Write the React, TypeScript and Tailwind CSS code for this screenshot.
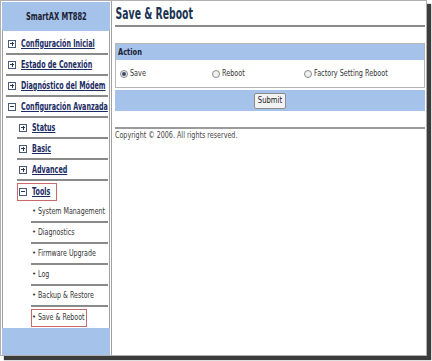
import React from "react";

const blue = "bg-[#a4c2ea]";

// texto comprimido a lo ancho, como en la captura
const Txt = ({ children, className = "", center }: { children: React.ReactNode; className?: string; center?: boolean }) => (
  <span className={`inline-block whitespace-nowrap ${center ? "origin-center" : "origin-left"} ${className}`}>
    {children}
  </span>
);

// cuadrito con + o -
const Box = ({ open }: { open?: boolean }) => (
  <span className="inline-flex items-center justify-center w-[8px] h-[8px] border border-[#4a5a7a] bg-white mr-[5px] shrink-0">
    <span className="block w-[4px] h-[1px] bg-[#2a3550] relative">
      {!open && <span className="absolute left-[1.5px] -top-[1.5px] block w-[1px] h-[4px] bg-[#2a3550]" />}
    </span>
  </span>
);

const Item = ({ label, indent, open, boxed, line = true }: { label: string; indent: string; open?: boolean; boxed?: string; line?: boolean }) => (
  <div className={`h-[21px] flex items-center ${indent}`}>
    <div className={`flex-1 min-w-0 h-full flex items-center ${line ? "border-b-2 border-[#8a8a8a]" : ""}`}>
      <span className={`flex items-center h-[18px] pl-[1px] shrink-0 ${boxed ? `border border-[#c86a6a] ${boxed}` : "border border-transparent"}`}>
        <Box open={open} />
        <Txt className="font-bold underline text-[#1b2c63] text-[10px] leading-none scale-x-[0.64]">{label}</Txt>
      </span>
    </div>
  </div>
);

const SubItem = ({ label, boxed, line = true }: { label: string; boxed?: string; line?: boolean }) => (
  <div className="h-[21px] flex items-center pl-[28px]">
    <div className={`flex-1 min-w-0 h-full flex items-center ${line ? "border-b-2 border-[#8a8a8a]" : ""}`}>
      <span className={`flex items-center h-[18px] shrink-0 text-[9px] leading-none text-[#333] ${boxed ? `border border-[#c86a6a] ${boxed}` : "border border-transparent"}`}>
        <span className="mr-[2px] text-[7px]">•</span>
        <Txt className="scale-x-[0.7]">{label}</Txt>
      </span>
    </div>
  </div>
);

const Radio = ({ checked, label, w }: { checked?: boolean; label: string; w: string }) => (
  <div className={`flex items-center ${w}`}>
    <span className="w-[8px] h-[8px] rounded-full border border-[#8a8a8a] bg-[#f0f0f0] flex items-center justify-center mr-[2px] shrink-0">
      {checked && <span className="w-[4px] h-[4px] rounded-full bg-[#3a4a6a]" />}
    </span>
    <Txt className="text-[9px] leading-none text-[#333] scale-x-[0.72]">{label}</Txt>
  </div>
);

export default function App() {
  return (
    <div className="w-[432px] h-[361px] bg-white overflow-hidden" style={{ fontFamily: '"DejaVu Sans",Verdana,sans-serif' }}>
      <div className="w-[427px] h-[356px] bg-white border border-[#b0b0b0] shadow-[4px_4px_1px_#3c3c3c] flex">
        {/* Menú lateral */}
        <div className="w-[111px] shrink-0 flex flex-col border-r border-[#a0a0a0] px-[1px]">
          <div className={`h-[30px] ${blue} flex items-center justify-center mt-[1px]`}>
            <Txt center className="font-bold text-[10px] leading-none text-[#1a2030] scale-x-[0.67]">SmartAX MT882</Txt>
          </div>
          <div className="flex-1 min-w-0 border-x border-[#a0a0a0] pt-[3px] pr-[1px]">
            <Item label="Configuración Inicial" indent="pl-[3px]" />
            <Item label="Estado de Conexión" indent="pl-[3px]" />
            <Item label="Diagnóstico del Módem" indent="pl-[3px]" />
            <Item label="Configuración Avanzada" indent="pl-[3px]" open />
            <Item label="Status" indent="pl-[14px]" />
            <Item label="Basic" indent="pl-[14px]" />
            <Item label="Advanced" indent="pl-[14px]" />
            <Item label="Tools" indent="pl-[14px]" open boxed="w-[40px]" line={false} />
            <SubItem label="System Management" />
            <SubItem label="Diagnostics" />
            <SubItem label="Firmware Upgrade" />
            <SubItem label="Log" />
            <SubItem label="Backup & Restore" />
            <SubItem label="Save & Reboot" boxed="w-[56px]" line={false} />
          </div>
          <div className={`h-[27px] ${blue}`} />
        </div>

        {/* Contenido */}
        <div className="flex-1 min-w-0 pl-[3px] pr-[1px]">
          <div className="h-[26px] flex items-end border-b-2 border-[#8a8a8a] pb-[3px]">
            <Txt className="font-bold text-[15px] text-[#1b3352] leading-none pl-[1px] scale-x-[0.62]">Save &amp; Reboot</Txt>
          </div>
          <div className="mt-[16px] border border-[#b5b5b5]">
            <div className={`h-[16px] ${blue} flex items-center pl-[2px]`}>
              <Txt className="font-bold text-[9px] leading-none text-[#1a2030] scale-x-[0.74]">Action</Txt>
            </div>
            <div className="h-[27px] flex items-center pl-[4px]">
              <Radio checked label="Save" w="w-[92px]" />
              <Radio label="Reboot" w="w-[92px]" />
              <Radio label="Factory Setting Reboot" w="flex-1" />
            </div>
          </div>
          <div className={`mt-[2px] h-[21px] ${blue} flex items-center justify-center`}>
            <button className="w-[32px] h-[16px] flex items-center justify-center text-[9px] text-[#222] bg-[#f2f2f2] border border-[#8c8c8c] rounded-[2px] leading-none">
              <Txt center className="scale-x-[0.76]">Submit</Txt>
            </button>
          </div>
          <div className="mt-[16px] border-t-2 border-[#9a9a9a] pt-[2px] flex">
            <Txt className="text-[9px] leading-none text-[#444] scale-x-[0.71]">Copyright © 2006. All rights reserved.</Txt>
          </div>
        </div>
      </div>
    </div>
  );
}
